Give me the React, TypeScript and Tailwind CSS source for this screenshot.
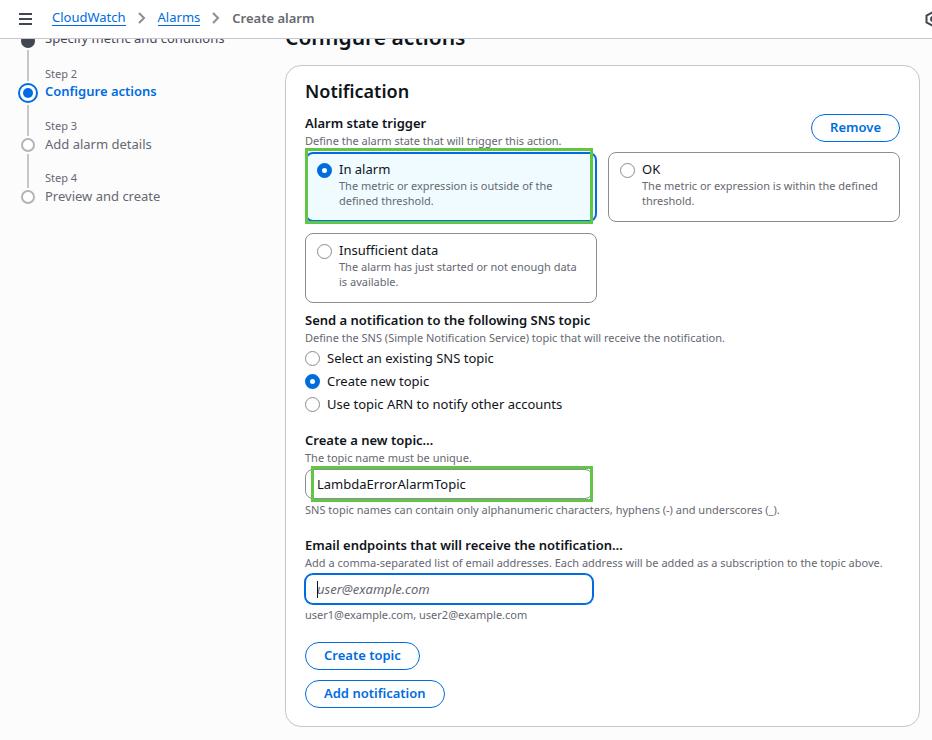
import React from "react";

type StepState = "done" | "current" | "todo";

const steps: { label?: string; title: string; state: StepState }[] = [
  { title: "Specify metric and conditions", state: "done" },
  { label: "Step 2", title: "Configure actions", state: "current" },
  { label: "Step 3", title: "Add alarm details", state: "todo" },
  { label: "Step 4", title: "Preview and create", state: "todo" },
];

const radioClass =
  "h-[15px] w-[15px] shrink-0 appearance-none rounded-full border border-[#8c8c94] bg-white checked:border-[5px] checked:border-[#006ce0]";

const pillClass =
  "flex h-7 items-center justify-center rounded-full border border-[#006ce0] bg-white px-[18px] pb-px text-[13px] font-semibold text-[#006ce0]";

function Chevron() {
  return (
    <svg width="8" height="12" viewBox="0 0 8 12" fill="none" stroke="#8c8c94" strokeWidth="2" aria-hidden="true">
      <path d="M1 1l5 5-5 5" />
    </svg>
  );
}

function Header() {
  return (
    <header className="relative z-10 flex h-[39px] items-center justify-between overflow-hidden border-b border-[#c6c6cd] bg-white pl-[19px]">
      <div className="flex items-center gap-5">
        <button type="button" aria-label="Open navigation" className="block">
          <svg width="13" height="12" viewBox="0 0 13 12" stroke="#424650" strokeWidth="2" aria-hidden="true">
            <path d="M0 1h13M0 6h13M0 11h13" />
          </svg>
        </button>
        <nav aria-label="Breadcrumbs" className="flex items-center gap-3 whitespace-nowrap pb-[3px] text-[13px] leading-[16px]">
          <a href="#cloudwatch" className="border-b border-[#006ce0] text-[#006ce0]">CloudWatch</a>
          <Chevron />
          <a href="#alarms" className="border-b border-[#006ce0] text-[#006ce0]">Alarms</a>
          <Chevron />
          <span className="font-semibold text-[#656871]">Create alarm</span>
        </nav>
      </div>
      <button type="button" aria-label="Settings" className="-mr-[9px] block">
        <svg width="16" height="16" viewBox="0 0 16 16" fill="none" stroke="#424650" strokeWidth="2" aria-hidden="true">
          <path d="M8 1l6.500 3.500v7L8 15l-6.500-3.500v-7z" />
          <circle cx="8" cy="8" r="2" />
        </svg>
      </button>
    </header>
  );
}

function Marker({ state }: { state: StepState }) {
  if (state === "current") {
    return (
      <span className="flex h-6 items-center">
        <span className="flex h-5 w-5 items-center justify-center rounded-full border-2 border-[#006ce0] bg-white">
          <span className="h-[10px] w-[10px] rounded-full bg-[#006ce0]" />
        </span>
      </span>
    );
  }
  return (
    <span className="flex h-[18px] items-center">
      {state === "done" ? (
        <span className="h-[14px] w-[14px] rounded-full bg-[#424650]" />
      ) : (
        <span className="h-[14px] w-[14px] rounded-full border-2 border-[#b4b4bb] bg-white" />
      )}
    </span>
  );
}

function Steps() {
  return (
    <ol className="-mt-[11px] pl-[18px]">
      {steps.map((s, i) => (
        <li key={s.title} className={s.label ? "flex h-[52px] gap-[7px]" : "flex h-[38px] gap-[7px]"}>
          <div className={s.label ? "flex w-5 flex-col items-center" : "flex w-5 flex-col items-center pt-1"}>
            {s.label && (
              <span className={s.state === "current" ? "h-[15px] w-[2px] bg-[#c6c6cd]" : "h-[18px] w-[2px] bg-[#c6c6cd]"} />
            )}
            <Marker state={s.state} />
            {i < steps.length - 1 && <span className="w-[2px] flex-1 bg-[#c6c6cd]" />}
          </div>
          <div className="whitespace-nowrap">
            {s.label && <div className="text-[11px] leading-[15px] text-[#656871]">{s.label}</div>}
            <a
              href={"#step-" + (i + 1)}
              className={
                s.state === "current"
                  ? "block text-[13px] font-semibold leading-[20px] text-[#006ce0]"
                  : s.state === "done"
                    ? "block text-[13px] leading-[20px] text-[#424650]"
                    : "block text-[13px] leading-[22px] text-[#656871]"
              }
            >
              {s.title}
            </a>
          </div>
        </li>
      ))}
    </ol>
  );
}

function Tile({ id, title, text, checked, marked }: { id: string; title: string; text: string; checked?: boolean; marked?: boolean }) {
  return (
    <div className="relative">
      <label
        htmlFor={id}
        className={
          checked
            ? "flex h-full gap-[7px] rounded-lg border-2 border-[#006ce0] bg-[#f0fbff] px-[10px] pb-3 pt-[6px]"
            : "flex h-full gap-[7px] rounded-lg border border-[#8c8c94] bg-white px-[11px] pb-[13px] pt-[7px]"
        }
      >
        <input id={id} type="radio" name="state" defaultChecked={checked} className={radioClass + " mt-[3px]"} />
        <span>
          <span className="block text-[13px] leading-[18px] text-[#0f141a]">{title}</span>
          <span className="block text-[11px] leading-[15px] text-[#656871]">{text}</span>
        </span>
      </label>
      {marked && <span className="pointer-events-none absolute -top-1 -bottom-[2px] left-0 right-1 border-[3px] border-[#62c544]" />}
    </div>
  );
}

function FieldHead({ title, text, htmlFor }: { title: string; text: string; htmlFor?: string }) {
  const Tag = htmlFor ? "label" : "div";
  return (
    <div>
      <Tag htmlFor={htmlFor} className="block text-[13px] font-semibold leading-[18px] text-[#0f141a]">{title}</Tag>
      <p className="mt-px text-[11px] leading-[15px] text-[#656871]">{text}</p>
    </div>
  );
}

function TopicRadio({ id, title, checked }: { id: string; title: string; checked?: boolean }) {
  return (
    <label htmlFor={id} className="flex items-center gap-[7px] text-[13px] leading-[18px] text-[#0f141a]">
      <input id={id} type="radio" name="topic" defaultChecked={checked} className={radioClass} />
      <span className="pb-px">{title}</span>
    </label>
  );
}

export default function App() {
  return (
    <div className="min-h-screen bg-[#fcfcfd] font-['Noto_Sans','Open_Sans',sans-serif]">
      <Header />
      <div className="flex overflow-hidden">
        <aside className="w-[285px] shrink-0">
          <Steps />
        </aside>
        <main className="-mt-[14px] min-w-0 flex-1 pb-3 pr-3">
          <h1 className="mb-4 text-[21px] font-semibold leading-[24px] text-[#0f141a]">Configure actions</h1>
          <section className="rounded-2xl border border-[#c6c6cd] bg-white px-[19px] pb-[18px] pt-[13px]">
            <h2 className="mb-[11px] text-[18px] font-semibold leading-[24px] text-[#0f141a]">Notification</h2>

            <div className="mb-1 flex justify-between">
              <FieldHead title="Alarm state trigger" text="Define the alarm state that will trigger this action." />
              <button type="button" className={pillClass}>Remove</button>
            </div>
            <div className="grid grid-cols-2 gap-[11px]">
              <Tile id="in-alarm" title="In alarm" text="The metric or expression is outside of the defined threshold." checked marked />
              <Tile id="ok" title="OK" text="The metric or expression is within the defined threshold." />
              <Tile id="insufficient" title="Insufficient data" text="The alarm has just started or not enough data is available." />
            </div>

            <div className="mt-2">
              <FieldHead
                title="Send a notification to the following SNS topic"
                text="Define the SNS (Simple Notification Service) topic that will receive the notification."
              />
              <div className="mt-1 flex flex-col gap-1">
                <TopicRadio id="existing" title="Select an existing SNS topic" />
                <TopicRadio id="create" title="Create new topic" checked />
                <TopicRadio id="arn" title="Use topic ARN to notify other accounts" />
              </div>
            </div>

            <div className="mt-[17px]">
              <FieldHead htmlFor="topic-name" title="Create a new topic…" text="The topic name must be unique." />
              <div className="relative mt-1 w-[288px]">
                <input
                  id="topic-name"
                  type="text"
                  defaultValue="LambdaErrorAlarmTopic"
                  className="block h-[30px] w-full rounded-lg border border-[#8c8c94] bg-white px-[11px] text-[13px] text-[#0f141a] outline-none"
                />
                <span className="pointer-events-none absolute -bottom-[3px] -top-[3px] left-[6px] right-0 border-[3px] border-[#62c544]" />
              </div>
              <p className="mt-[3px] text-[11px] leading-[15px] text-[#656871]">
                SNS topic names can contain only alphanumeric characters, hyphens (-) and underscores (_).
              </p>
            </div>

            <div className="mt-[19px]">
              <FieldHead
                htmlFor="emails"
                title="Email endpoints that will receive the notification…"
                text="Add a comma-separated list of email addresses. Each address will be added as a subscription to the topic above."
              />
              <div className="relative mt-1 w-[288px]">
                <input
                  id="emails"
                  type="text"
                  placeholder="user@example.com"
                  className="block h-[30px] w-full rounded-lg border border-[#006ce0] bg-white px-[11px] text-[13px] text-[#0f141a] outline-none ring-1 ring-[#006ce0] placeholder:italic placeholder:text-[#656871]"
                />
                <span className="pointer-events-none absolute left-3 top-[7px] h-[17px] w-px bg-[#0f141a]" />
              </div>
              <p className="mt-[3px] text-[11px] leading-[15px] text-[#656871]">user1@example.com, user2@example.com</p>
            </div>

            <div className="mt-5 flex flex-col items-start gap-[10px]">
              <button type="button" className={pillClass}>Create topic</button>
              <button type="button" className={pillClass}>Add notification</button>
            </div>
          </section>
        </main>
      </div>
    </div>
  );
}
